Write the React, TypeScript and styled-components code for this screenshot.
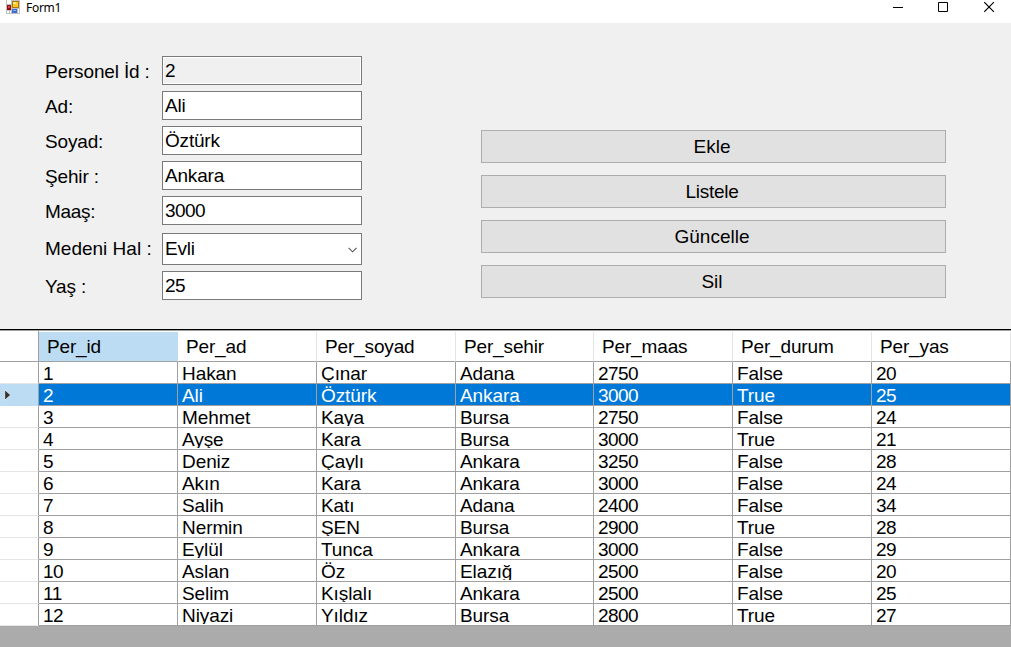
import React from 'react';
import styled, { createGlobalStyle } from 'styled-components';

const GlobalStyle = createGlobalStyle`
  * { box-sizing: border-box; }
  html, body { margin: 0; padding: 0; }
  body { overflow: hidden; }
`;

const Window = styled.div`
  width: 1011px;
  height: 647px;
  display: flex;
  flex-direction: column;
  overflow: hidden;
  background: #f0f0f0;
  color: #000;
  font-family: 'Liberation Sans', Arial, sans-serif;
  font-size: 19px;
`;

const TitleBar = styled.header`
  flex: none;
  height: 23px;
  display: flex;
  align-items: flex-start;
  background: #fff;
  padding-left: 6px;
`;

const Title = styled.span`
  flex: 1;
  margin-left: 6px;
  font-family: 'Noto Sans', 'Open Sans', sans-serif;
  font-size: 12px;
  line-height: 16px;
  letter-spacing: -0.3px;
`;

const WindowButtons = styled.div`
  display: flex;
  gap: 35px;
  margin-right: 16px;
`;

const WindowButton = styled.button`
  width: 11px;
  height: 15px;
  padding: 0;
  border: 0;
  background: none;
  display: flex;
`;

const Body = styled.main`
  flex: none;
  height: 306px;
  display: flex;
  align-items: flex-start;
  padding: 33px 65px 0 45px;
`;

const Fields = styled.div`
  width: 317px;
  display: flex;
  flex-direction: column;
`;

const Field = styled.label<{ $gap?: number }>`
  display: flex;
  align-items: flex-start;
  margin-bottom: ${(p) => p.$gap ?? 6}px;
`;

const Caption = styled.span<{ $spacing?: number }>`
  width: 117px;
  padding-top: 5px;
  line-height: 22px;
  height: 29px;
  white-space: pre;
  letter-spacing: ${(p) => p.$spacing ?? -0.15}px;
`;

const Box = styled.span<{ $readOnly?: boolean; $tall?: boolean; $numeric?: boolean }>`
  width: 200px;
  height: ${(p) => (p.$tall ? 32 : 29)}px;
  padding: ${(p) => (p.$tall ? 4 : 3)}px 2px 0 2px;
  border: 1px solid #7a7a7a;
  background: ${(p) => (p.$readOnly ? '#f0f0f0' : '#fff')};
  box-shadow: inset 0 0 0 1px #fff;
  display: flex;
  justify-content: space-between;
  line-height: 22px;
  letter-spacing: ${(p) => (p.$numeric ? -0.53 : -0.2)}px;
`;

const Actions = styled.div`
  width: 465px;
  margin: 74px 0 0 auto;
  display: flex;
  flex-direction: column;
  gap: 12px;
`;

const ActionButton = styled.button<{ $spacing?: number }>`
  height: 33px;
  padding: 0 3px 0 0;
  border: 1px solid #adadad;
  border-radius: 0;
  background: #e1e1e1;
  color: #000;
  font: inherit;
  line-height: 22px;
  letter-spacing: ${(p) => p.$spacing ?? 0}px;
`;

const GridView = styled.section`
  flex: 1;
  border-top: 1px solid #000;
  background: #ababab;
`;

const columns = '39px 139px 139px 139px 138px 139px 139px 139px';

const HeaderRow = styled.div`
  display: grid;
  grid-template-columns: ${columns};
  height: 32px;
  border-top: 1px solid #a0a0a0;
  background: #fff;
  padding-top: 1px;
`;

const CornerCell = styled.div`
  border-right: 1px solid #a0a0a0;
  border-bottom: 1px solid #a0a0a0;
  margin-top: -1px;
`;

const HeaderCell = styled.div<{ $active?: boolean }>`
  padding: 4px 0 0 8px;
  line-height: 22px;
  letter-spacing: -0.15px;
  border-right: 1px solid ${(p) => (p.$active ? '#bcdcf4' : '#e5e5e5')};
  border-bottom: 1px solid #a0a0a0;
  background: ${(p) => (p.$active ? '#bcdcf4' : '#fff')};
`;

const Row = styled.div<{ $selected?: boolean }>`
  display: grid;
  grid-template-columns: ${columns};
  height: 22px;
  background: ${(p) => (p.$selected ? '#0078d7' : '#fff')};
  color: ${(p) => (p.$selected ? '#fff' : '#000')};
`;

const RowHeader = styled.div<{ $selected?: boolean }>`
  display: flex;
  align-items: center;
  padding-left: 4px;
  border-right: 1px solid #a0a0a0;
  border-bottom: 1px solid ${(p) => (p.$selected ? '#bcdcf4' : '#e5e5e5')};
  background: ${(p) => (p.$selected ? '#bcdcf4' : '#fff')};
`;

/* The bottom pixel strip of each cell stays clear of descenders. */
const Cell = styled.div<{ $numeric?: boolean; $selected?: boolean }>`
  height: 22px;
  padding-left: 4px;
  overflow: hidden;
  line-height: 23px;
  letter-spacing: ${(p) => (p.$numeric ? -0.53 : -0.08)}px;
  border-right: 1px solid #a0a0a0;
  border-bottom: 1px solid #a0a0a0;
  position: relative;

  &::after {
    content: '';
    position: absolute;
    left: 0;
    right: 0;
    bottom: 0;
    height: 1px;
    background: ${(p) => (p.$selected ? '#0078d7' : '#fff')};
  }
`;

const AppIcon = () => (
  <svg width="14" height="14" viewBox="0 0 14 14" shapeRendering="crispEdges">
    <rect width="14" height="14" fill="#c0c0c0" />
    <rect x="1" y="0" width="4" height="4" fill="#fff" />
    <rect x="1" y="5" width="4" height="5" fill="#8e1010" />
    <rect x="2" y="6" width="2" height="2" fill="#d8483a" />
    <rect x="1" y="11" width="2" height="2" fill="#fff" />
    <rect x="4" y="11" width="1" height="2" fill="#fff" />
    <rect x="6" y="1" width="7" height="7" fill="#a87808" />
    <rect x="7" y="2" width="5" height="5" fill="#ffc828" />
    <rect x="7" y="2" width="3" height="2" fill="#ffe88a" />
    <rect x="6" y="9" width="5" height="4" fill="#3c6cd0" />
    <rect x="7" y="10" width="3" height="1" fill="#86b0f4" />
    <rect x="12" y="9" width="1" height="4" fill="#fff" />
  </svg>
);

const headings = ['Per_id', 'Per_ad', 'Per_soyad', 'Per_sehir', 'Per_maas', 'Per_durum', 'Per_yas'];

const people = [
  ['1', 'Hakan', 'Çınar', 'Adana', '2750', 'False', '20'],
  ['2', 'Ali', 'Öztürk', 'Ankara', '3000', 'True', '25'],
  ['3', 'Mehmet', 'Kaya', 'Bursa', '2750', 'False', '24'],
  ['4', 'Ayşe', 'Kara', 'Bursa', '3000', 'True', '21'],
  ['5', 'Deniz', 'Çaylı', 'Ankara', '3250', 'False', '28'],
  ['6', 'Akın', 'Kara', 'Ankara', '3000', 'False', '24'],
  ['7', 'Salih', 'Katı', 'Adana', '2400', 'False', '34'],
  ['8', 'Nermin', 'ŞEN', 'Bursa', '2900', 'True', '28'],
  ['9', 'Eylül', 'Tunca', 'Ankara', '3000', 'False', '29'],
  ['10', 'Aslan', 'Öz', 'Elazığ', '2500', 'False', '20'],
  ['11', 'Selim', 'Kışlalı', 'Ankara', '2500', 'False', '25'],
  ['12', 'Niyazi', 'Yıldız', 'Bursa', '2800', 'True', '27'],
];

const selectedIndex = 1;

export default function App() {
  return (
    <Window>
      <GlobalStyle />
      <TitleBar>
        <AppIcon />
        <Title>Form1</Title>
        <WindowButtons>
          <WindowButton aria-label="Minimize">
            <svg width="11" height="15"><path d="M0 7.5h10" stroke="#000" transform="translate(1 0)" /></svg>
          </WindowButton>
          <WindowButton aria-label="Maximize">
            <svg width="11" height="15"><path d="M.5 2.5h9v9h-9z" fill="none" stroke="#000" /></svg>
          </WindowButton>
          <WindowButton aria-label="Close">
            <svg width="11" height="15"><path d="M.3 2.2l9.6 9.6M9.9 2.2L.3 11.8" fill="none" stroke="#000" strokeWidth="1.1" /></svg>
          </WindowButton>
        </WindowButtons>
      </TitleBar>
      <Body>
        <Fields>
          <Field><Caption>Personel İd :</Caption><Box $readOnly $numeric>2</Box></Field>
          <Field><Caption>Ad:</Caption><Box>Ali</Box></Field>
          <Field><Caption>Soyad:</Caption><Box>Öztürk</Box></Field>
          <Field><Caption>Şehir :</Caption><Box>Ankara</Box></Field>
          <Field $gap={8}><Caption $spacing={-0.3}>Maaş:</Caption><Box $numeric>3000</Box></Field>
          <Field>
            <Caption $spacing={0}>Medeni Hal :</Caption>
            <Box $tall>
              Evli
              <svg width="12" height="24" viewBox="0 0 12 24"><path d="M1.6 9.8l4 4 4-4" fill="none" stroke="#555" strokeWidth="1.1" /></svg>
            </Box>
          </Field>
          <Field><Caption>Yaş :</Caption><Box $numeric>25</Box></Field>
        </Fields>
        <Actions>
          <ActionButton>Ekle</ActionButton>
          <ActionButton $spacing={-0.3}>Listele</ActionButton>
          <ActionButton>Güncelle</ActionButton>
          <ActionButton>Sil</ActionButton>
        </Actions>
      </Body>
      <GridView>
        <HeaderRow>
          <CornerCell />
          {headings.map((name, i) => <HeaderCell key={name} $active={i === 0}>{name}</HeaderCell>)}
        </HeaderRow>
        {people.map((person, r) => (
          <Row key={person[0]} $selected={r === selectedIndex}>
            <RowHeader $selected={r === selectedIndex}>
              {r === selectedIndex && (
                <svg width="8" height="12"><path d="M.7 .8v10.4L6.6 6z" fill="#333" stroke="#fff" strokeWidth=".7" /></svg>
              )}
            </RowHeader>
            {person.map((value, c) => (
              <Cell key={c} $numeric={c === 0 || c === 4 || c === 6} $selected={r === selectedIndex}>{value}</Cell>
            ))}
          </Row>
        ))}
      </GridView>
    </Window>
  );
}
